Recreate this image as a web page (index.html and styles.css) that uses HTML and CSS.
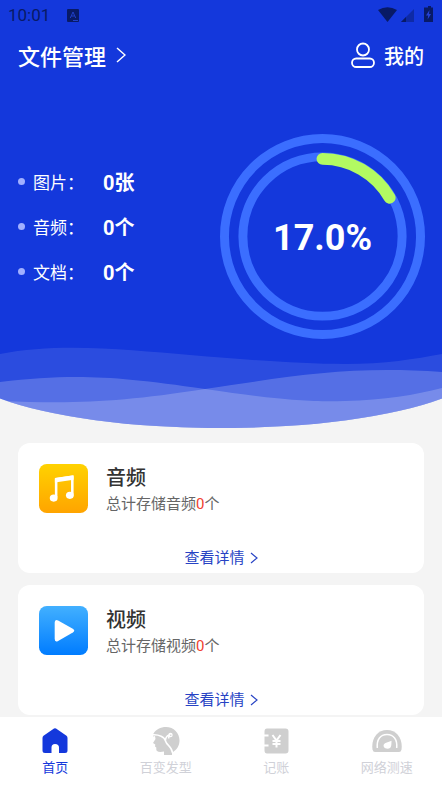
FILE: index.html
```html
<!DOCTYPE html>
<html lang="zh-CN">
<head>
<meta charset="utf-8">
<meta name="viewport" content="width=device-width, initial-scale=1">
<title>文件管理</title>
<link rel="stylesheet" href="styles.css">
</head>
<body>
<div class="app">
  <section class="hero">
    <svg class="hero-bg" viewBox="0 0 442 428" preserveAspectRatio="none" aria-hidden="true">
      <defs>
        <clipPath id="dome"><path d="M0 0H442V398.500A265 66 0 0 1 0 398.500Z"/></clipPath>
      </defs>
      <g clip-path="url(#dome)">
        <rect class="sea" width="442" height="428"/>
        <path class="wave-back" d="M0 354C60 342 130 350 190 355C250 360 300 364 345 364C385 364 415 359 442 354V428H0Z"/>
        <path class="wave" d="M0 382C70 374 110 375 205 389C280 400 310 402 345 401C385 400 415 395 442 388V428H0Z"/>
        <path class="wave" d="M0 401C80 404 120 402 205 389C300 375 350 366 442 372V428H0Z"/>
      </g>
    </svg>

    <div class="statusbar">
      <span class="clock">10:01</span>
      <svg class="notice" viewBox="0 0 12 13" aria-hidden="true"><rect class="ink" width="12" height="13" rx="1"/><path class="cut" d="M3.300 9L6 3L8.700 9M4.300 7H7.700M6 11.500H11"/></svg>
      <svg class="signals" viewBox="0 0 56 18" aria-hidden="true">
        <path class="ink" d="M0 4Q9.500-1.500 19 4L9.500 16Z"/>
        <path class="ink faint" d="M36 3V16H23Z"/><path class="ink" d="M28 11V16H23Z"/>
        <path class="ink" d="M48 1.500H50V0H53V1.500H55V16H46V1.500Z"/><path class="bolt" d="M51.500 4L48 9.500H50.200L49.600 13.500L53 8H51Z"/>
      </svg>
    </div>

    <header class="topbar">
      <a class="title" href="#files">文件管理
        <svg class="title-arrow" viewBox="0 0 10 16" aria-hidden="true"><path d="M1 1L9 8L1 15"/></svg>
      </a>
      <a class="mine" href="#mine">
        <svg class="person" viewBox="0 0 24 26" aria-hidden="true"><circle cx="12" cy="7.500" r="6"/><rect x="1" y="16.500" width="22" height="8.500" rx="4.250"/></svg>
        我的
      </a>
    </header>

    <div class="overview">
      <dl class="stats">
        <div class="stat"><dt>图片：</dt><dd>0张</dd></div>
        <div class="stat"><dt>音频：</dt><dd>0个</dd></div>
        <div class="stat"><dt>文档：</dt><dd>0个</dd></div>
      </dl>
      <div class="gauge">
        <svg viewBox="0 0 206 206" aria-hidden="true">
          <circle class="ring" cx="103" cy="103" r="98.500"/>
          <circle class="ring" cx="103" cy="103" r="80"/>
          <path class="progress" d="M103 25A78 78 0 0 1 170.500 64"/>
        </svg>
        <strong class="percent">17.0%</strong>
      </div>
    </div>
  </section>

  <main class="cards">
    <article class="card">
      <div class="card-head">
        <svg class="tile" viewBox="0 0 50 50" aria-hidden="true">
          <defs><linearGradient id="gold" x1="0" y1="0" x2="0" y2="1"><stop offset="0" stop-color="#ffd200"/><stop offset="1" stop-color="#ffa400"/></linearGradient></defs>
          <rect width="50" height="50" rx="8" fill="url(#gold)"/>
          <path class="note-stem" d="M17.500 34V15.500L34 13V31.500"/>
          <path class="white" d="M16.200 15.300Q16.200 14.500 17 14.300L34.200 11.800Q35.300 11.700 35.300 13V16L16.200 18.800Z"/>
          <ellipse class="white" cx="15" cy="34.800" rx="4" ry="3.600"/>
          <ellipse class="white" cx="31.500" cy="32" rx="4" ry="3.600"/>
        </svg>
        <div>
          <h2>音频</h2>
          <p>总计存储音频<em>0</em>个</p>
        </div>
      </div>
      <a class="detail" href="#audio">查看详情
        <svg class="detail-arrow" viewBox="0 0 8 12" aria-hidden="true"><path d="M1 1L7 6L1 11"/></svg>
      </a>
    </article>

    <article class="card">
      <div class="card-head">
        <svg class="tile" viewBox="0 0 50 50" aria-hidden="true">
          <defs><linearGradient id="sky" x1="0" y1="0" x2="0" y2="1"><stop offset="0" stop-color="#42b0ff"/><stop offset="1" stop-color="#007cff"/></linearGradient></defs>
          <rect width="50" height="50" rx="8" fill="url(#sky)"/>
          <path class="white" d="M16 17Q16 13 19.500 14.700L34.500 23.200Q37.500 25 34.500 27L19.500 35.600Q16 37.300 16 33.500Z"/>
        </svg>
        <div>
          <h2>视频</h2>
          <p>总计存储视频<em>0</em>个</p>
        </div>
      </div>
      <a class="detail" href="#video">查看详情
        <svg class="detail-arrow" viewBox="0 0 8 12" aria-hidden="true"><path d="M1 1L7 6L1 11"/></svg>
      </a>
    </article>
  </main>

  <nav class="tabs">
    <a class="tab active" href="#home" aria-current="page">
      <svg viewBox="0 0 30 28" aria-hidden="true"><path d="M14 1.500Q15 .800 16 1.500L26.500 8.700Q27.500 9.500 27.500 11V23.500Q27.500 26 25 26H19V20.500Q19 17 15 17Q11.500 17 11.500 20.500V26H5Q2.500 26 2.500 23.500V11Q2.500 9.500 3.500 8.700Z"/></svg>
      首页
    </a>
    <a class="tab" href="#hair">
      <svg viewBox="0 0 30 28" aria-hidden="true">
        <path d="M2.500 6.500C5 2.500 9.500 0 15 0C22.800 0 28.500 6 28.500 13.500C28.500 18.500 26 23 21 25.500V28H13V24.500Q8 25.500 6 24Q5 23 5.300 20.500L4 19.500L4.300 17.500L2 16L4.500 12L4 9L2 9.500Z"/>
        <path class="gap thin" d="M2 7.800C8 7.500 13.500 10 14.500 14C15.500 18.500 21 19 21.500 26M14.500 13.500Q14.500 9.500 18 8M18.500 8L17.500 11.500"/>
        <circle class="dot" cx="19.500" cy="8" r="2.200"/>
        <circle cx="19.800" cy="8.300" r=".700"/>
      </svg>
      百变发型
    </a>
    <a class="tab" href="#bills">
      <svg viewBox="0 0 30 28" aria-hidden="true">
        <path d="M6 1.500H24.500Q27.500 1.500 27.500 4.500V23.500Q27.500 26.500 24.500 26.500H6Q3.500 26.500 3.500 23.500V19.500H7.500V17.500H3.500V9.500H7.500V7.500H3.500V4.500Q3.500 1.500 6 1.500Z"/>
        <path class="gap" d="M11.500 8L15.500 13.500L19.500 8M15.500 13.500V20.500M11.500 14H19.500M11.500 17H19.500"/>
      </svg>
      记账
    </a>
    <a class="tab" href="#speed">
      <svg viewBox="0 0 30 28" aria-hidden="true">
        <path d="M3 25Q1 25 .500 22.500C-1 12 5 3 15 3C25 3 31 12 29.500 22.500Q29 25 27 25Z"/>
        <path class="gap thin" d="M5.300 21C4.500 12.500 8.500 7.500 15 7.500C21.500 7.500 25.500 12.500 24.700 21"/>
        <path class="dot" d="M19.500 13.800C19.300 17.500 20 21.700 15.500 21.700C12.500 21.700 11 19.500 11.800 17.500C13 15.500 16 15.500 19.500 13.800Z"/>
      </svg>
      网络测速
    </a>
  </nav>
</div>
</body>
</html>
```
FILE: styles.css
```css
* { box-sizing: border-box; }

body {
  margin: 0;
  background: #f4f4f4;
  color: #333;
  font-family: Roboto, "Noto Sans CJK SC", sans-serif;
}

a { color: inherit; text-decoration: none; }
h2, p, dl, dd { margin: 0; }
svg { display: block; flex: none; }

.app {
  display: flex;
  flex-direction: column;
  height: 100vh;
}

.hero {
  position: relative;
  flex: none;
  padding-bottom: 89px;
  color: #fff;
}

.hero-bg {
  position: absolute;
  inset: 0;
  z-index: -1;
  width: 100%;
  height: 100%;
}
.sea { fill: #1438dc; }
.wave-back { fill: #fff; fill-opacity: .1; }
.wave { fill: #fff; fill-opacity: .2; }

.statusbar {
  display: flex;
  align-items: center;
  height: 30px;
  padding: 0 8px;
  color: #081a66;
}
.clock { font-size: 17px; }
.notice { width: 12px; height: 13px; margin-left: 17px; }
.signals { width: 56px; height: 18px; margin-left: auto; }
.ink { fill: #081a66; }
.faint { fill: #0e2aa6; }
.cut { fill: none; stroke: #2040c8; stroke-width: 1; }
.bolt { fill: #2442d8; }

.topbar {
  display: flex;
  align-items: center;
  justify-content: space-between;
  height: 50px;
  padding: 0 18px;
  font-weight: 500;
}
.title, .mine { display: flex; align-items: center; gap: 10px; }
.title { font-size: 22px; }
.mine { gap: 9px; font-size: 20px; }
.title-arrow { width: 10px; height: 16px; }
.title-arrow path { fill: none; stroke: currentColor; stroke-width: 1.5; }
.person { width: 24px; height: 26px; fill: none; stroke: #fff; stroke-width: 1.8; }

.overview {
  display: flex;
  align-items: center;
  justify-content: space-between;
  padding: 54px 17px 0 18px;
}

.stats { display: grid; gap: 15px; margin-bottom: 20px; }
.stat { display: flex; align-items: center; height: 30px; }
.stat::before {
  content: "";
  width: 7px;
  height: 7px;
  margin-right: 8px;
  border-radius: 50%;
  background: #a1b0ff;
}
.stat dt { width: 70px; font-size: 17px; }
.stat dd { font-size: 20px; font-weight: 700; }

.gauge { display: grid; place-items: center; }
.gauge > * { grid-area: 1 / 1; }
.gauge svg { width: 205px; height: 205px; }
.ring { fill: none; stroke: #3b6eff; stroke-width: 9; }
.progress { fill: none; stroke: #b2fa62; stroke-width: 12; stroke-linecap: round; }
.percent { padding-top: 3px; font-size: 36px; font-weight: 700; }

.cards {
  display: flex;
  flex: 1;
  flex-direction: column;
  gap: 12px;
  min-height: 0;
  overflow: hidden;
  padding: 15px 18px 0;
}
.card {
  display: flex;
  flex: none;
  flex-direction: column;
  height: 130px;
  padding: 21px 21px 3px;
  border-radius: 12px;
  background: #fff;
}
.card-head { display: flex; gap: 18px; }
.tile { width: 49px; height: 49px; }
.card h2 { font-size: 20px; font-weight: 500; line-height: 28px; }
.card p { color: #666; font-size: 15px; line-height: 24px; }
.card em { color: #f04030; font-style: normal; }
.detail {
  display: flex;
  align-items: center;
  align-self: center;
  gap: 5px;
  margin-top: auto;
  color: #2743c4;
  font-size: 15px;
  line-height: 24px;
}
.detail-arrow { width: 8px; height: 12px; }
.detail-arrow path { fill: none; stroke: currentColor; stroke-width: 1.2; }

.white { fill: #fff; }
.note-stem { fill: none; stroke: #fff; stroke-width: 2.6; }

.tabs {
  display: grid;
  flex: none;
  grid-template-columns: repeat(4, 1fr);
  height: 68px;
  padding-top: 10px;
  background: #fff;
}
.tab {
  display: flex;
  flex-direction: column;
  align-items: center;
  gap: 3px;
  color: #d0d1d8;
  font-size: 13px;
  line-height: 20px;
}
.tab svg { width: 30px; height: 28px; fill: #cfcfcf; }
.tab .gap { fill: none; stroke: #fff; stroke-width: 2; }
.tab .thin { stroke-width: 1.5; }
.tab .dot { fill: #fff; }
.tab.active { color: #1438dc; }
.tab.active svg { fill: #1438dc; }
```
